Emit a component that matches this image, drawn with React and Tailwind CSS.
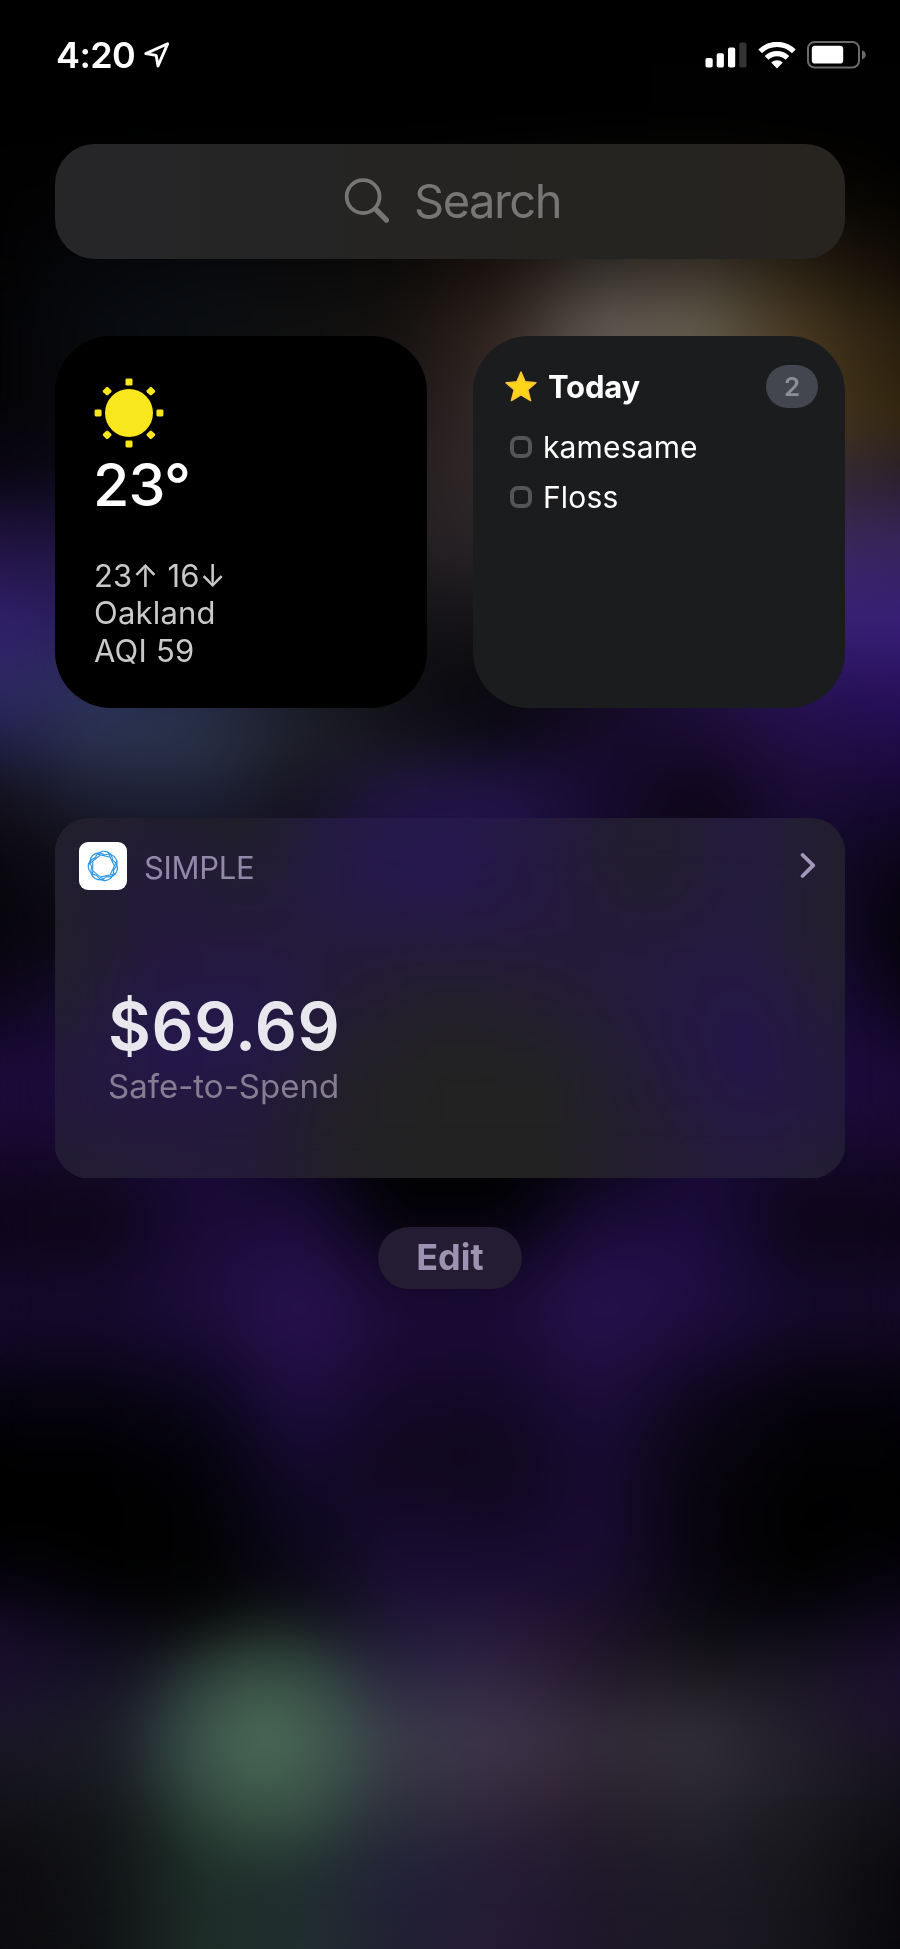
import React from "react";

// Colour samples of the blurred wallpaper: [y, colours from left to right].
const WALLPAPER = [
  [0, "#000000 #000000 #000000 #000000 #000000 #000000 #000000 #000000 #000000 #000000"],
  [130, "#000000 #000000 #000000 #000000 #000000 #000000 #000000 #010101 #010101 #010101"],
  [200, "#020203 #030304 #040506 #050505 #060505 #0c0a09 #12100e #14110d #0c0905 #050402"],
  [270, "#030304 #06080c #080a0e #0a0a0b #0d0b0a #1b1310 #35302b #3b352c #292013 #120d06"],
  [325, "#040406 #080b10 #0c0f13 #101010 #151210 #33251e #605a52 #625b4d #46371f #261c0d"],
  [420, "#050407 #090a0e #0a0a0c #100e0e #1e1819 #362d2c #5a5550 #62594d #4c3d24 #33260f"],
  [480, "#0b0717 #0d0a18 #0a090e #100d0e #272021 #302829 #4a4548 #433b3e #382c36 #2a1f30"],
  [540, "#20143f #1e1340 #0e0a18 #0d0b0d #241f22 #2b2629 #353038 #3a2f4c #3a2c5c #35265a"],
  [620, "#31206c #2a1d58 #181428 #0c0b10 #141317 #151318 #201a2a #2c1e4c #3a2178 #392078"],
  [690, "#2e2862 #2b3058 #242a44 #1a1c28 #0e0e13 #09080c #120b20 #1c0f3c #271254 #2a115e"],
  [740, "#201f48 #2b3450 #29334a #1e2029 #15141c #0d0a18 #170b2c #190c30 #210f46 #200d4a"],
  [790, "#14121e #1f2136 #1f2338 #161420 #211642 #221448 #170b30 #0e0618 #1b0d38 #160a34"],
  [860, "#0a080e #11101c #12101e #151024 #20104a #221248 #150b2c #0b0614 #160a30 #0c0618"],
  [930, "#08060c #0c0814 #1b0f38 #180e30 #120c24 #100a20 #180c34 #180c34 #1a0c3a #050308"],
  [1000, "#0d071a #180c34 #240f50 #180c30 #08060c #08060a #140a2a #200e4a #1e0c46 #0c0618"],
  [1075, "#1b0b3a #1d0c40 #200d48 #0e081c #020202 #020202 #0a0614 #1c0c40 #200d48 #190a38"],
  [1130, "#190a34 #190a34 #1c0c3c #0c0718 #000000 #000000 #080410 #180b36 #180a34 #180a32"],
  [1190, "#10071f #10081e #190b36 #140a2c #010102 #010102 #120926 #1a0b38 #10071e #10071f"],
  [1230, "#0e061a #0e061a #1a0b38 #1d0d40 #07040e #07040f #1b0c3c #1b0c40 #0d0618 #0d0618"],
  [1300, "#150a2c #160a2c #1c0d3c #29124f #1a0b36 #1a0b36 #28124f #1e0e42 #150a2c #150a2a"],
  [1340, "#120826 #120826 #170b32 #27104c #1a0b36 #190b34 #241048 #190b36 #110822 #11081f"],
  [1400, "#06040e #06040e #0b061a #1c0e40 #140927 #130926 #1c0e3c #0e071c #05030a #05030a"],
  [1460, "#010102 #010102 #04030a #150a2e #11081f #10081e #180b32 #09060f #020204 #020204"],
  [1520, "#000000 #000000 #020204 #0e0820 #150a2b #130926 #190c33 #07040c #000000 #010102"],
  [1580, "#06040c #010102 #020303 #0d0a18 #1b0f34 #1a0e34 #190d30 #09060f #010101 #07040e"],
  [1625, "#150b28 #0c0816 #08090a #101416 #201838 #251839 #1c1128 #0c0b10 #0a0812 #130a22"],
  [1675, "#1b1030 #161226 #1e2629 #263333 #2c2742 #302542 #241a2c #1c1a1f #1b1624 #1c1030"],
  [1735, "#1a1628 #1b1c26 #2c3a40 #364945 #3a3a49 #3e344a #332c3b #322f38 #221d2c #1a1228"],
  [1780, "#16151e #17191f #293938 #314341 #353644 #382d42 #2d2533 #2d2a32 #201e26 #14121a"],
  [1830, "#101014 #121417 #1f3029 #273832 #292b38 #2c2238 #241c2b #232129 #1a191e #0f0e13"],
  [1870, "#0d0c10 #101215 #1e2e29 #212f2f #22223a #251c36 #1f192a #1e1b26 #17161b #0a090d"],
  [1949, "#0c0b0f #0f1113 #1e2d28 #212f2f #222032 #251a35 #1f182a #1d1a25 #16151a #09080c"],
];

// Colour samples of the frosted account card, relative to its top edge.
const FROST = [
  [0, "#25222f #211f2d #201f28 #251b45 #261a4c #241b40 #221e2e #251b40 #24212c"],
  [60, "#211f2e #23193c #221d32 #25194a #261650 #24193f #221e2c #241a40 #23202b"],
  [120, "#222029 #24193a #241a3c #241a3c #241a3e #241a3c #241a3c #241a3f #23202a"],
  [190, "#221e2e #251848 #25184a #231c32 #222027 #231d2f #241a3e #251749 #231d32"],
  [240, "#231b38 #25174c #241848 #22202a #222222 #222225 #231b3a #25164c #231b38"],
  [290, "#23193c #24183f #23193c #222124 #222222 #222222 #231c32 #251846 #23193c"],
  [360, "#242030 #241d36 #241b38 #222025 #222222 #222222 #241e32 #241c3a #242030"],
];

// Rows are stacked so that each one fades in over the one above it.
function ColourMesh({ rows, children }) {
  return (
    <div className="absolute inset-0 overflow-hidden" aria-hidden="true">
      {rows.map(([y, colours], i) => {
        const top = i === 0 ? 0 : rows[i - 1][0];
        const fade = `linear-gradient(to bottom, transparent 0px, black ${y - top}px)`;
        return (
          <div
            key={y}
            className="absolute inset-x-0 bottom-0"
            style={{
              top,
              backgroundImage: `linear-gradient(to right, ${colours.split(" ").join(", ")})`,
              maskImage: i === 0 ? "none" : fade,
            }}
          />
        );
      })}
      {children}
      <div className="absolute inset-0 backdrop-blur-[22px]" />
    </div>
  );
}

function StatusBar() {
  return (
    <header className="flex h-[110px] items-center pl-[56px] pr-[34px] text-white">
      <span className="w-[88px] text-[36px] font-semibold leading-none tracking-[-0.6px]">4:20</span>
      <svg className="size-[26px]" viewBox="0 0 26 26" fill="none" stroke="currentColor" strokeWidth="2.9" strokeLinejoin="round">
        <path d="M23.6 1.8 1.8 11.6 12.2 13.4 14 24Z" />
      </svg>
      <div className="ml-auto flex items-center">
        <svg className="h-[26px] w-[42px]" viewBox="0 0 42 26" fill="currentColor">
          <rect x="0.5" y="16" width="7.2" height="9.6" rx="1.8" />
          <rect x="11.7" y="11.2" width="7.2" height="14.4" rx="1.8" />
          <rect x="23" y="5.6" width="7.2" height="20" rx="1.8" />
          <rect x="34.3" y="0.4" width="7.2" height="25.2" rx="1.8" fill="#333333" />
        </svg>
        <svg className="ml-[11px] h-[27px] w-[38px]" viewBox="0 0 38 27" fill="none" stroke="currentColor" strokeWidth="5.2">
          <path d="M2.2 9.4A23.6 23.6 0 0 1 35.8 9.4" />
          <path d="M8.6 15.9A14.7 14.7 0 0 1 29.4 15.9" />
          <path d="M19 26.4 13.2 20.6A8.3 8.3 0 0 1 24.8 20.6Z" fill="currentColor" stroke="none" />
        </svg>
        <svg className="ml-[11px] h-[28px] w-[59px]" viewBox="0 0 59 28">
          <rect x="1" y="1" width="51" height="25.4" rx="6.5" fill="none" stroke="#6b6b6b" strokeWidth="2" />
          <rect x="4.8" y="4.8" width="31.4" height="17.8" rx="3.4" fill="#ffffff" />
          <path d="M55 9.2C57.4 10 58.8 11.8 58.8 13.8S57.4 17.6 55 18.4Z" fill="#6b6b6b" />
        </svg>
      </div>
    </header>
  );
}

function SearchBar() {
  return (
    <div className="mt-[34px] flex h-[115px] items-center rounded-[40px] bg-linear-to-r from-[#262629] via-[#252422] to-[#272420] pl-[289px] text-[#787675]">
      <svg className="size-[47px]" viewBox="0 0 48 48" fill="none" stroke="currentColor" strokeLinecap="round">
        <circle cx="19.5" cy="19" r="16.8" strokeWidth="3.8" />
        <path d="M32 31.5 43.4 43" strokeWidth="5.4" />
      </svg>
      <span className="ml-[23px] pb-[2px] text-[47px] leading-none tracking-[-1.5px]">Search</span>
    </div>
  );
}

const RAYS = [0, 45, 90, 135, 180, 225, 270, 315];

function WeatherCard() {
  return (
    <section className="h-[372px] w-[372px] rounded-[56px] bg-black pl-[39px] pt-[42px]">
      <svg className="size-[70px]" viewBox="-35 -35 70 70" fill="#f9e71e">
        <circle r="24" />
        {RAYS.map((angle) => (
          <rect key={angle} x="-3.5" y="-34.4" width="7" height="7" rx="1.4" transform={`rotate(${angle})`} />
        ))}
      </svg>
      <p className="-ml-[1px] mt-[2px] text-[59px] font-medium leading-[70px] tracking-[-0.8px] text-white">23°</p>
      <div className="mt-[36.5px] text-[31px] leading-[37.5px] tracking-[0.2px] text-[#c9c9c9]">
        <p>23↑ 16↓</p>
        <p>Oakland</p>
        <p>AQI 59</p>
      </div>
    </section>
  );
}

function TodayCard() {
  return (
    <section className="h-[372px] w-[372px] rounded-[56px] bg-[#1b1c1e] pl-[32px] pr-[27px] pt-[29px] text-white">
      <div className="flex h-[43px] items-center">
        <svg className="h-[31px] w-[32px]" viewBox="0 0 32 31">
          <path
            d="M16 1 20.2 10.8 31 11.8 22.8 18.8 25.6 29.6 16 24 6.4 29.6 9.2 18.8 1 11.8 11.8 10.8Z"
            fill="#ffd51a"
            stroke="#fbc437"
            strokeWidth="1.4"
            strokeLinejoin="round"
          />
        </svg>
        <h2 className="ml-[11px] text-[31px] font-bold leading-none tracking-[-0.2px]">Today</h2>
        <span className="ml-auto flex h-[43px] w-[52px] items-center justify-center rounded-full bg-[#44464f] text-[26px] font-semibold leading-none text-[#8d8e95]">
          2
        </span>
      </div>
      <ul className="mt-[14px] pl-[5px] text-[30px]">
        {["kamesame", "Floss"].map((task) => (
          <li key={task} className="flex h-[50.3px] items-center">
            <span className="size-[22px] rounded-[8px] border-4 border-[#545557]" />
            <span className="ml-[11px] pb-[1px] leading-none tracking-[0.15px]">{task}</span>
          </li>
        ))}
      </ul>
    </section>
  );
}

const STRANDS = [0, 1, 2, 3, 4, 5, 6];

function SimpleLogo() {
  return (
    <span className="flex size-[48px] items-center justify-center rounded-[9px] bg-white">
      <svg className="size-[32px]" viewBox="-16 -16 32 32" fill="none" stroke="#2c96e4" strokeWidth="1.15" strokeLinecap="round">
        {STRANDS.map((n) => (
          <path
            key={n}
            d="M-8.8 -7.2C-6 -17.3 6 -17.3 8.8 -7.2M-9.6 -11.2 5 -9.8"
            transform={`rotate(${(n * 360) / STRANDS.length + 8})`}
          />
        ))}
      </svg>
    </span>
  );
}

function SimpleCard() {
  return (
    <section className="relative mt-[110px] h-[360px] overflow-hidden rounded-[34px]">
      <ColourMesh rows={FROST} />
      <div className="relative pl-[24px] pt-[24px]">
        <div className="flex h-[48px] items-center pr-[29px] text-[#9288aa]">
          <SimpleLogo />
          <h2 className="ml-[17px] pt-[3px] text-[31px] leading-none tracking-[-0.3px]">SIMPLE</h2>
          <svg className="ml-auto h-[26px] w-[16px]" viewBox="0 0 16 26" fill="none" stroke="#a398bb" strokeWidth="3.8" strokeLinecap="round" strokeLinejoin="round">
            <path d="M2.6 2 13.2 12.4 2.6 23" />
          </svg>
        </div>
        <div className="mt-[96px] pl-[29px]">
          <p className="text-[66px] font-semibold leading-[80px] tracking-[0.5px] text-[#e9e7ee]">$69.69</p>
          <p className="text-[33px] leading-[40px] text-[#857d92]">Safe-to-Spend</p>
        </div>
      </div>
    </section>
  );
}

export default function App() {
  return (
    <main className="relative h-[1949px] w-[900px] overflow-hidden bg-black font-['Inter',sans-serif]">
      <ColourMesh rows={WALLPAPER}>
        <div className="absolute left-[132px] top-[1600px] h-[280px] w-[260px] bg-radial-[closest-side] from-[#4a6c57] via-[#47695580] to-transparent" />
      </ColourMesh>
      <div className="relative">
        <StatusBar />
        <div className="px-[55px]">
          <SearchBar />
          <div className="mt-[77px] flex justify-between">
            <WeatherCard />
            <TodayCard />
          </div>
          <SimpleCard />
          <button className="mx-auto mt-[49px] flex h-[62px] w-[144px] items-center justify-center rounded-full bg-[#231c33] pb-[2px] text-[36px] font-bold leading-none text-[#9d92b2]">
            Edit
          </button>
        </div>
      </div>
    </main>
  );
}
